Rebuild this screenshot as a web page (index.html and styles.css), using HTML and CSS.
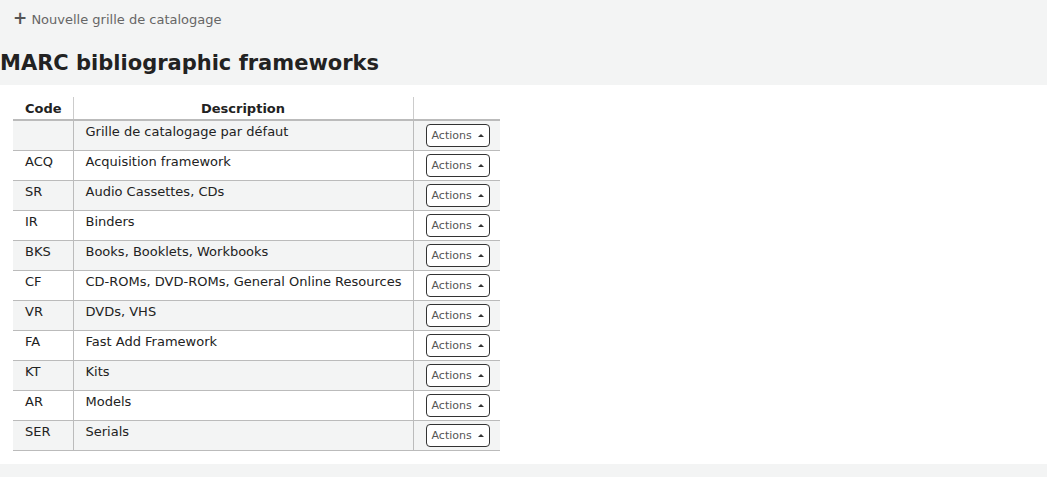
FILE: index.html
```html
<!DOCTYPE html>
<html>
<head>
<meta charset="utf-8">
<link rel="stylesheet" href="styles.css">
</head>
<body>
<div class="top">
  <div class="toolbar"><a class="newlink" href="#"><span class="plus">+</span> Nouvelle grille de catalogage</a></div>
  <h1>MARC bibliographic frameworks</h1>
</div>
<div class="main">
  <table class="fw">
    <colgroup><col class="c-code"><col class="c-desc"><col class="c-act"></colgroup>
    <thead>
      <tr><th>Code</th><th>Description</th><th></th></tr>
    </thead>
    <tbody>
      <tr><td></td><td>Grille de catalogage par défaut</td><td><button class="btn">Actions <span class="caret"></span></button></td></tr>
      <tr><td>ACQ</td><td>Acquisition framework</td><td><button class="btn">Actions <span class="caret"></span></button></td></tr>
      <tr><td>SR</td><td>Audio Cassettes, CDs</td><td><button class="btn">Actions <span class="caret"></span></button></td></tr>
      <tr><td>IR</td><td>Binders</td><td><button class="btn">Actions <span class="caret"></span></button></td></tr>
      <tr><td>BKS</td><td>Books, Booklets, Workbooks</td><td><button class="btn">Actions <span class="caret"></span></button></td></tr>
      <tr><td>CF</td><td>CD-ROMs, DVD-ROMs, General Online Resources</td><td><button class="btn">Actions <span class="caret"></span></button></td></tr>
      <tr><td>VR</td><td>DVDs, VHS</td><td><button class="btn">Actions <span class="caret"></span></button></td></tr>
      <tr><td>FA</td><td>Fast Add Framework</td><td><button class="btn">Actions <span class="caret"></span></button></td></tr>
      <tr><td>KT</td><td>Kits</td><td><button class="btn">Actions <span class="caret"></span></button></td></tr>
      <tr><td>AR</td><td>Models</td><td><button class="btn">Actions <span class="caret"></span></button></td></tr>
      <tr><td>SER</td><td>Serials</td><td><button class="btn">Actions <span class="caret"></span></button></td></tr>
    </tbody>
  </table>
</div>
<div class="bottom"></div>
</body>
</html>
```

FILE: styles.css
```css
html, body {
  margin: 0;
  padding: 0;
  background: #fff;
  font-family: "DejaVu Sans", sans-serif;
  color: #222;
}
.top {
  background: #f3f4f4;
  height: 85px;
  overflow: hidden;
}
.toolbar {
  padding: 9px 0 0 13px;
  height: 18px;
  font-size: 13px;
  line-height: 18px;
}
.newlink {
  color: #666;
  text-decoration: none;
}
.plus {
  font-size: 17px;
  color: #555;
  font-weight: bold;
}
h1 {
  margin: 23px 0 0 0;
  font-size: 21px;
  line-height: 26px;
  font-weight: bold;
  color: #222;
}
.main {
  padding: 12px 0 13px 13px;
}
.fw {
  border-collapse: collapse;
  table-layout: fixed;
  width: 487px;
  font-size: 13px;
}
.c-code { width: 60px; }
.c-desc { width: 340px; }
.c-act { width: 87px; }
.fw th {
  font-weight: bold;
  text-align: center;
  height: 20px;
  padding: 2px 12px 0;
  line-height: 16px;
  vertical-align: middle;
  border-left: 1px solid #ccc;
  border-bottom: 2px solid #bbb;
  white-space: nowrap;
  box-sizing: content-box;
}
.fw th:first-child { border-left: none; }
.fw td {
  height: 30px;
  padding: 3px 0 0 12px;
  vertical-align: top;
  line-height: 16px;
  border-left: 1px solid #bbb;
  border-bottom: 1px solid #bbb;
  box-sizing: border-box;
  white-space: nowrap;
}
.fw td:first-child { border-left: none; }
.fw tbody tr:nth-child(odd) td { background: #f3f4f4; }
.fw tbody tr:nth-child(even) td { background: #fff; }
.fw td:last-child {
  padding: 3px 0 0 12px;
}
.btn {
  display: inline-flex;
  align-items: center;
  gap: 6px;
  height: 23px;
  padding: 0 5px;
  border: 1px solid #333;
  border-radius: 4px;
  background: #fff;
  font-family: "DejaVu Sans", sans-serif;
  font-size: 11px;
  color: #555;
  box-sizing: border-box;
}
.caret {
  width: 0;
  height: 0;
  border-left: 3px solid transparent;
  border-right: 3px solid transparent;
  border-bottom: 3px solid #333;
}
.bottom {
  background: #f3f4f4;
  height: 14px;
}
```
